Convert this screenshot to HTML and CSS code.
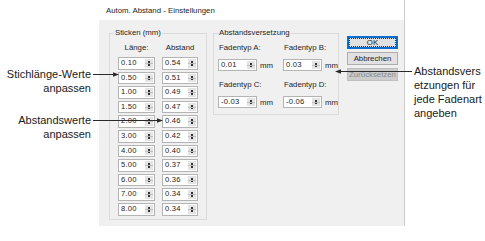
FILE: index.html
```html
<!DOCTYPE html>
<html lang="de">
<head>
<meta charset="utf-8">
<title>Autom. Abstand - Einstellungen</title>
<link rel="stylesheet" href="styles.css">
</head>
<body>
<div class="page">
  <div class="dialog">
    <div class="titlebar">Autom. Abstand - Einstellungen</div>
    <div class="dlg-body">
      <div class="group group-stitch">
        <span class="legend">Sticken (mm)</span>
        <div class="col-head"><span>Länge:</span><span>Abstand</span></div>
        <div class="spin-grid">
          <div class="spin"><span class="val">0.10</span><span class="arrows"></span></div>
          <div class="spin"><span class="val">0.54</span><span class="arrows"></span></div>
          <div class="spin"><span class="val">0.50</span><span class="arrows"></span></div>
          <div class="spin"><span class="val">0.51</span><span class="arrows"></span></div>
          <div class="spin"><span class="val">1.00</span><span class="arrows"></span></div>
          <div class="spin"><span class="val">0.49</span><span class="arrows"></span></div>
          <div class="spin"><span class="val">1.50</span><span class="arrows"></span></div>
          <div class="spin"><span class="val">0.47</span><span class="arrows"></span></div>
          <div class="spin"><span class="val">2.00</span><span class="arrows"></span></div>
          <div class="spin"><span class="val">0.46</span><span class="arrows"></span></div>
          <div class="spin"><span class="val">3.00</span><span class="arrows"></span></div>
          <div class="spin"><span class="val">0.42</span><span class="arrows"></span></div>
          <div class="spin"><span class="val">4.00</span><span class="arrows"></span></div>
          <div class="spin"><span class="val">0.40</span><span class="arrows"></span></div>
          <div class="spin"><span class="val">5.00</span><span class="arrows"></span></div>
          <div class="spin"><span class="val">0.37</span><span class="arrows"></span></div>
          <div class="spin"><span class="val">6.00</span><span class="arrows"></span></div>
          <div class="spin"><span class="val">0.36</span><span class="arrows"></span></div>
          <div class="spin"><span class="val">7.00</span><span class="arrows"></span></div>
          <div class="spin"><span class="val">0.34</span><span class="arrows"></span></div>
          <div class="spin"><span class="val">8.00</span><span class="arrows"></span></div>
          <div class="spin"><span class="val">0.34</span><span class="arrows"></span></div>
        </div>
      </div>
      <div class="group group-offset">
        <span class="legend">Abstandsversetzung</span>
        <div class="offset-grid">
          <div class="field">
            <div class="field-label">Fadentyp A:</div>
            <div class="field-row"><div class="spin spin-wide"><span class="val">0.01</span><span class="arrows"></span></div><span class="unit">mm</span></div>
          </div>
          <div class="field">
            <div class="field-label">Fadentyp B:</div>
            <div class="field-row"><div class="spin spin-wide"><span class="val">0.03</span><span class="arrows"></span></div><span class="unit">mm</span></div>
          </div>
          <div class="field">
            <div class="field-label">Fadentyp C:</div>
            <div class="field-row"><div class="spin spin-wide"><span class="val">-0.03</span><span class="arrows"></span></div><span class="unit">mm</span></div>
          </div>
          <div class="field">
            <div class="field-label">Fadentyp D:</div>
            <div class="field-row"><div class="spin spin-wide"><span class="val">-0.06</span><span class="arrows"></span></div><span class="unit">mm</span></div>
          </div>
        </div>
      </div>
      <div class="buttons">
        <div class="btn btn-default"><span class="focus">OK</span></div>
        <div class="btn">Abbrechen</div>
        <div class="btn btn-disabled">Zurücksetzen</div>
      </div>
    </div>
  </div>

  <div class="callout callout-left callout-1">Stichlänge-Werte<br>anpassen</div>
  <div class="callout callout-left callout-2">Abstandswerte<br>anpassen</div>
  <div class="callout callout-right">Abstandsvers<br>etzungen für<br>jede Fadenart<br>angeben</div>

  <svg class="leaders" width="485" height="241" viewBox="0 0 485 241">
    <g stroke="#2a2a2a" stroke-width="1" fill="none">
      <line x1="93" y1="74.5" x2="114" y2="74.5"/>
      <line x1="93" y1="120.5" x2="158" y2="120.5"/>
      <line x1="340" y1="71.5" x2="412" y2="71.5"/>
    </g>
    <g fill="#2a2a2a">
      <polygon points="119,74.5 113,72.3 113,76.7"/>
      <polygon points="163,120.5 157,118.3 157,122.7"/>
      <polygon points="335,71.5 341,69.3 341,73.7"/>
    </g>
  </svg>
</div>
</body>
</html>
```

FILE: styles.css
```css
* { box-sizing: border-box; }

html, body {
  margin: 0;
  padding: 0;
  background: #ffffff;
}

.page {
  position: relative;
  width: 485px;
  height: 241px;
  overflow: hidden;
  font-family: "Liberation Sans", Arial, sans-serif;
}

.dialog {
  margin-left: 99px;
  width: 306px;
  height: 226px;
  border-right: 1px solid #cbcbcb;
  display: flex;
  flex-direction: column;
  font-size: 7.8px;
  color: #1e1e1e;
}

.titlebar {
  height: 20px;
  padding: 6px 0 0 7px;
  line-height: 10px;
  background: #ffffff;
}

.dlg-body {
  flex: 1;
  background: #f0f0f0;
  display: flex;
  align-items: flex-start;
  padding: 13px 0 0 10px;
}

.group {
  position: relative;
  border: 1px solid #dadada;
}

.legend {
  position: absolute;
  top: -6px;
  left: 4px;
  padding: 0 1px;
  line-height: 10px;
  background: #f0f0f0;
}

.group-stitch {
  width: 98px;
  height: 187px;
  padding: 0 8px;
}

.col-head {
  display: grid;
  grid-template-columns: 37px 36px;
  column-gap: 7px;
  margin-top: 9px;
  line-height: 10px;
  text-align: center;
}

.spin-grid {
  display: grid;
  grid-template-columns: 37px 36px;
  column-gap: 7px;
  row-gap: 2px;
  grid-auto-rows: 12.6px;
  margin-top: 4px;
}

.spin {
  display: flex;
  align-items: stretch;
  background: #ffffff;
  border: 1px solid #b4b4b4;
  height: 12.6px;
}

.val {
  flex: 1;
  padding-left: 2px;
  line-height: 10px;
  font-size: 7.6px;
  color: #222;
  letter-spacing: 0.2px;
}

.arrows {
  width: 8px;
  margin: 1px 1px 1px 0;
  background-color: #e4e4e4;
  background-image:
    linear-gradient(to bottom, transparent 4px, #bdbdbd 4px, #bdbdbd 5px, transparent 5px),
    conic-gradient(from 150deg at 50% 1px, #333 0 60deg, transparent 60deg),
    conic-gradient(from -30deg at 50% calc(100% - 1px), #333 0 60deg, transparent 60deg);
  background-size: 100% 100%, 100% 4px, 100% 4px;
  background-position: 0 0, 0 0, 0 100%;
  background-repeat: no-repeat;
}

.group-offset {
  width: 126px;
  height: 82px;
  margin-left: 6px;
  padding: 9px 0 0 4px;
}

.offset-grid {
  display: grid;
  grid-template-columns: 65px 56px;
  row-gap: 9px;
}

.field-label {
  line-height: 10px;
  padding-left: 1px;
}

.field-row {
  display: flex;
  align-items: center;
  margin-top: 6px;
}

.spin-wide {
  width: 39px;
  height: 12px;
}

.unit {
  margin-left: 3px;
}

.buttons {
  margin-left: 8px;
  margin-top: 3px;
  width: 51px;
  display: flex;
  flex-direction: column;
  gap: 3px;
}

.btn {
  height: 13px;
  border: 1px solid #adadad;
  background: #e1e1e1;
  text-align: center;
  line-height: 11px;
}

.btn-default {
  border: 1px solid #0a6fd0;
  box-shadow: inset 0 0 0 1px #0a6fd0;
  padding: 1px;
}

.btn-default .focus {
  display: block;
  height: 100%;
  border: 1px dotted #333;
  line-height: 7px;
}

.btn-disabled {
  background: #cccccc;
  border-color: #bfbfbf;
  color: #8a8a8a;
}

.callout {
  position: absolute;
  font-size: 11px;
  line-height: 14px;
  color: #1a1a1a;
}

.callout-left {
  left: 0;
  width: 91px;
  text-align: right;
}

.callout-1 { top: 67px; }
.callout-2 { top: 113px; }

.callout-right {
  left: 414px;
  top: 64px;
}

.leaders {
  position: absolute;
  left: 0;
  top: 0;
  pointer-events: none;
}
```
